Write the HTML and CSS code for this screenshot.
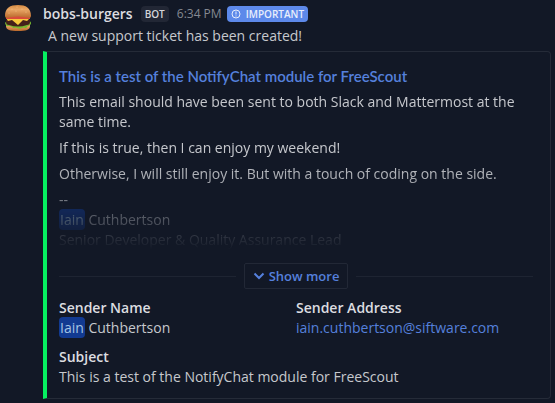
FILE: index.html
```html
<!DOCTYPE html>
<html lang="en">
<head>
<meta charset="utf-8">
<title>bobs-burgers</title>
<link rel="stylesheet" href="styles.css">
</head>
<body>
<article class="post">
  <svg class="avatar" viewBox="0 0 28 28" aria-hidden="true">
    <defs>
      <linearGradient id="bun" x1="0" y1="0" x2="0" y2="1">
        <stop offset="0" stop-color="#d58a42"/>
        <stop offset=".35" stop-color="#e9a765"/>
        <stop offset="1" stop-color="#b9672b"/>
      </linearGradient>
    </defs>
    <path d="M2 19h24v3c0 4-4 5-12 5S2 26 2 22z" fill="url(#bun)"/>
    <path d="M1 19q1-2 3-1l20-1q3 0 3 2c0 3-3 2-4 4s-3 0-5 1-3 1-5 0-3 1-5-1-6 1-7-4z" fill="#78b82e"/>
    <path d="M2 16q12-3 24 0v2q0 3-3 3-9 3-18 0-3 0-3-3z" fill="#45201a"/>
    <path d="M2 14h24l-3 3-4-1-5 5-6-5-4 1z" fill="#f8c83a"/>
    <path d="M2 13q12-4 24 0v2H2z" fill="#d94b3c"/>
    <path d="M1 12C1 4 6 1 14 1s13 3 13 11q0 2-2 2-11-3-22 0-2 0-2-2z" fill="url(#bun)"/>
    <g fill="#f3c78c"><circle cx="8" cy="5" r=".5"/><circle cx="13" cy="3" r=".5"/><circle cx="18" cy="5" r=".5"/><circle cx="12" cy="7" r=".5"/><circle cx="22" cy="8" r=".5"/><circle cx="5" cy="9" r=".5"/></g>
  </svg>
  <div class="content">
    <header class="head">
      <strong class="user">bobs-burgers</strong>
      <span class="bot">BOT</span>
      <time class="time">6:34 PM</time>
      <span class="priority">
        <svg class="alert" viewBox="0 0 10 10" aria-hidden="true"><circle cx="5" cy="5" r="4" fill="none" stroke="currentColor"/><path d="M5 2.500v3M5 6.500v1" stroke="currentColor"/></svg>
        IMPORTANT
      </span>
    </header>
    <p class="message">A new support ticket has been created!</p>
    <section class="card">
      <a class="title" href="#">This is a test of the NotifyChat module for FreeScout</a>
      <div class="excerpt">
        <p>This email should have been sent to both Slack and Mattermost at the same time.</p>
        <p>If this is true, then I can enjoy my weekend!</p>
        <p>Otherwise, I will still enjoy it. But with a touch of coding on the side.</p>
        <p>--<br><mark>Iain</mark> Cuthbertson<br>Senior Developer &amp; Quality Assurance Lead</p>
      </div>
      <div class="more">
        <button class="more-button" type="button">
          <svg class="chevron" viewBox="0 0 12 8" aria-hidden="true"><path d="M1.500 1.500 6 6l4.500-4.500" fill="none" stroke="currentColor" stroke-width="2"/></svg>
          Show more
        </button>
      </div>
      <dl class="fields">
        <div><dt>Sender Name</dt><dd><mark>Iain</mark> Cuthbertson</dd></div>
        <div><dt>Sender Address</dt><dd><a href="mailto:iain.cuthbertson@siftware.com">iain.cuthbertson@siftware.com</a></dd></div>
        <div class="wide"><dt>Subject</dt><dd>This is a test of the NotifyChat module for FreeScout</dd></div>
      </dl>
    </section>
  </div>
</article>
</body>
</html>
```
FILE: styles.css
```css
* {
  box-sizing: border-box;
}

body {
  margin: 0;
  background: #121826;
  color: #c6c8cd;
  font: 14px/20px "Open Sans", sans-serif;
}

p, dl, dd {
  margin: 0;
}

a {
  color: #5580dc;
  text-decoration: none;
}

.post {
  display: flex;
  gap: 11px;
  padding: 4px;
}

.avatar {
  flex: none;
  width: 28px;
  height: 28px;
}

.content {
  flex: 1;
  min-width: 0;
}

.head {
  display: flex;
  align-items: center;
  height: 20px;
}

.user {
  color: #dcdde0;
  font-weight: 600;
}

.bot {
  margin: 0 8px;
  padding: 0 4px;
  border-radius: 4px;
  background: #222735;
  color: #d4d6da;
  font-size: 10px;
  font-weight: 600;
  line-height: 16px;
}

.time {
  color: #858992;
  font-size: 12px;
}

.priority {
  display: flex;
  align-items: center;
  gap: 5px;
  margin-left: 5px;
  padding: 0 4px;
  border-radius: 4px;
  background: #5d89ea;
  color: #e8eefc;
  font-size: 10px;
  font-weight: 600;
  line-height: 16px;
}

.alert {
  width: 10px;
  height: 10px;
}

.message {
  padding: 2px 5px 0;
}

.card {
  margin-top: 5px;
  padding: 14px 17px 11px 12px;
  border: 1px solid #252b38;
  border-left: 4px solid #06f060;
  border-radius: 0 4px 4px 0;
}

.title {
  display: block;
  font-family: Lato, sans-serif;
  font-size: 15px;
  font-weight: 600;
}

.excerpt {
  margin-top: 6px;
  -webkit-mask-image: linear-gradient(#000 45%, transparent);
  mask-image: linear-gradient(#000 45%, transparent);
}

.excerpt p + p {
  margin-top: 6px;
}

mark {
  padding: 1px;
  border-radius: 4px;
  background: #123a91;
  color: #a4c4e4;
}

.more {
  display: flex;
  align-items: center;
  gap: 8px;
  margin-top: 13px;
}

.more::before,
.more::after {
  content: "";
  flex: 1;
  height: 1px;
  background: #1e2432;
}

.more-button {
  display: flex;
  align-items: center;
  gap: 4px;
  height: 26px;
  padding: 0 8px;
  border: 1px solid #222836;
  border-radius: 2px;
  background: none;
  color: #5580dc;
  font: 600 13px/20px "Open Sans", sans-serif;
}

.chevron {
  width: 12px;
  height: 8px;
}

.fields {
  display: grid;
  grid-template-columns: 1fr 1fr;
  row-gap: 9px;
  margin-top: 9px;
}

.wide {
  grid-column: 1 / -1;
}

dt {
  color: #dcdde0;
  font-weight: 600;
}
```
